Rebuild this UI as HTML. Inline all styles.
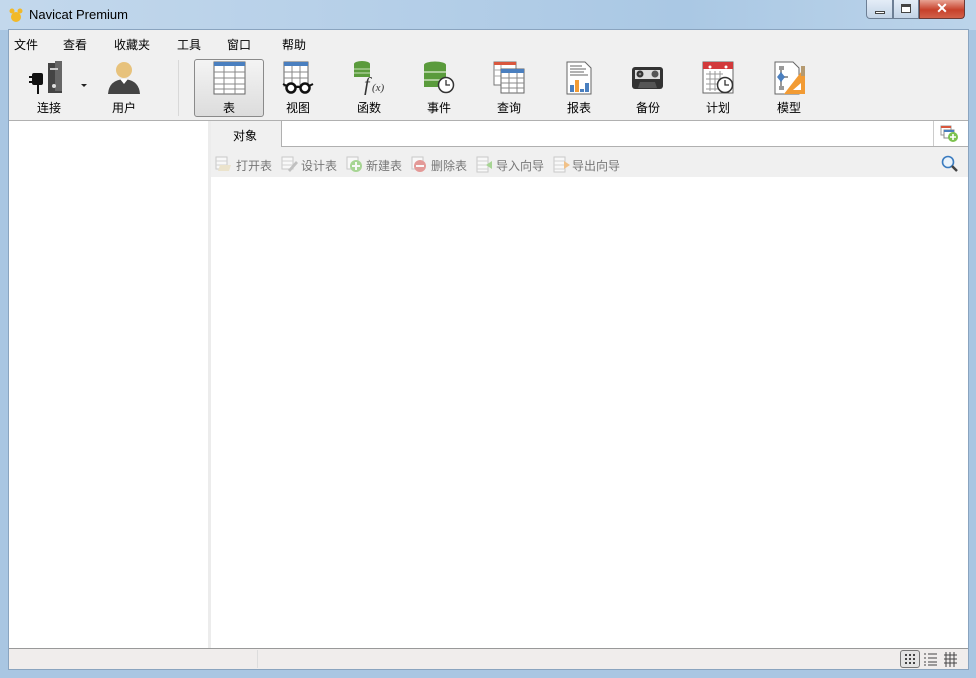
<!DOCTYPE html><html><head><meta charset="utf-8"><style>
*{margin:0;padding:0;box-sizing:border-box}
body{width:976px;height:678px;overflow:hidden;font-family:"Liberation Sans","Noto Sans CJK SC",sans-serif;font-size:12px;color:#000;background:#a9c6e2;position:relative}
.a{position:absolute}
.title{left:0;top:0;width:976px;height:30px;background:linear-gradient(90deg,#c3d8ec,#b5cfe8 40%,#aac8e4 70%,#bcd4ea)}
.client{left:8px;top:29px;width:961px;height:641px;background:#f0f0f0;border:1px solid #8aa4bf}
.tb{text-align:center;width:70px;font-size:12px}
.tb svg{display:block;margin:0 auto}
.at{color:#777;font-size:12px;top:157px}
</style></head><body>
<div class="a title"></div>
<svg class="a" style="left:8px;top:7px" width="16" height="16"><circle cx="8" cy="10" r="5" fill="#f2b928"/><circle cx="4" cy="4" r="2.5" fill="#f2b928"/><circle cx="12" cy="4" r="2.5" fill="#f2b928"/></svg>
<div class="a" style="left:29px;top:7px;font-size:13px">Navicat Premium</div>
<div class="a" style="left:866px;top:0;width:27px;height:19px;border:1px solid #6d7f95;border-top:0;border-radius:0 0 0 4px;background:linear-gradient(#e4edf7,#c3d4e7)"><div class="a" style="left:8px;top:11px;width:10px;height:3px;background:#fff;border:1px solid #444"></div></div>
<div class="a" style="left:893px;top:0;width:26px;height:19px;border:1px solid #6d7f95;border-top:0;background:linear-gradient(#e4edf7,#c3d4e7)"><div class="a" style="left:7px;top:4px;width:10px;height:9px;border:1px solid #444;border-top-width:3px;background:#fff"></div></div>
<div class="a" style="left:919px;top:0;width:46px;height:19px;border:1px solid #6d3a35;border-top:0;border-radius:0 0 4px 0;background:linear-gradient(#e8a393,#c7412b 55%,#d2614a);color:#fff;font-weight:bold;font-size:14px;text-align:center;line-height:17px">✕</div>
<div class="a client"></div>
<div class="a" style="top:36px;left:14px">文件</div>
<div class="a" style="top:36px;left:63px">查看</div>
<div class="a" style="top:36px;left:114px">收藏夹</div>
<div class="a" style="top:36px;left:177px">工具</div>
<div class="a" style="top:36px;left:227px">窗口</div>
<div class="a" style="top:36px;left:282px">帮助</div>
<div class="a" style="left:178px;top:60px;width:1px;height:56px;background:#d8d8d8"></div>
<div class="a" style="left:194px;top:59px;width:70px;height:58px;border:1px solid #8a8a8a;border-radius:3px;background:linear-gradient(#f4f4f4,#dcdcdc)"></div>
<div class="a tb" style="left:14px;top:61px"><svg width="40" height="34"><rect x="19" y="2" width="14" height="30" fill="#444"/><rect x="26" y="0" width="7" height="30" fill="#666"/><rect x="21" y="7" width="8" height="2" fill="#ccc"/><circle cx="25" cy="25" r="2" fill="#ddd"/><rect x="3" y="12" width="11" height="12" rx="2" fill="#111"/><rect x="0" y="15" width="4" height="2" fill="#111"/><rect x="0" y="20" width="4" height="2" fill="#111"/><rect x="8" y="24" width="2" height="9" fill="#111"/></svg><div style="margin-top:4px">连接</div></div>
<div class="a" style="left:81px;top:84px;border:3px solid transparent;border-top:3px solid #222"></div>
<div class="a tb" style="left:89px;top:61px"><svg width="34" height="34"><circle cx="17" cy="9" r="8" fill="#e7c27c"/><path d="M1 33 Q2 19 17 18 Q32 19 33 33Z" fill="#444"/><path d="M13 18 L17 23 L21 18Z" fill="#fff"/></svg><div style="margin-top:4px">用户</div></div>
<div class="a tb" style="left:194px;top:61px"><svg width="34" height="34"><rect x="2" y="1" width="31" height="32" fill="#fff" stroke="#666"/><rect x="2" y="1" width="31" height="4" fill="#4a7fbf"/><path d="M2 11H33M2 17H33M2 23H33M2 28H33M12 5V33M23 5V33" stroke="#888"/></svg><div style="margin-top:4px">表</div></div>
<div class="a tb" style="left:263px;top:61px"><svg width="34" height="34"><rect x="3" y="1" width="24" height="24" fill="#fff" stroke="#666"/><rect x="3" y="1" width="24" height="4" fill="#4a7fbf"/><path d="M3 11H27M3 17H27M11 5V25M19 5V25" stroke="#888"/><circle cx="10" cy="27" r="4.5" fill="#fff" stroke="#111" stroke-width="2.5"/><circle cx="24" cy="27" r="4.5" fill="#fff" stroke="#111" stroke-width="2.5"/><path d="M14 26H20M2 23L6 25M32 23L28 25" stroke="#111" stroke-width="2"/></svg><div style="margin-top:4px">视图</div></div>
<div class="a tb" style="left:334px;top:61px"><svg width="34" height="34"><ellipse cx="10" cy="3" rx="8" ry="3" fill="#5a9b3c"/><rect x="2" y="3" width="16" height="13" fill="#5a9b3c"/><path d="M2 8H18M2 12H18" stroke="#c8e0b8"/><text x="12" y="30" font-family="Liberation Serif" font-style="italic" font-size="20" fill="#333">f</text><text x="20" y="30" font-family="Liberation Serif" font-style="italic" font-size="11" fill="#333">(x)</text></svg><div style="margin-top:4px">函数</div></div>
<div class="a tb" style="left:404px;top:61px"><svg width="34" height="34"><ellipse cx="13" cy="4" rx="11" ry="3.5" fill="#5a9b3c"/><rect x="2" y="4" width="22" height="22" fill="#5a9b3c"/><path d="M2 11H24M2 19H24" stroke="#c8e0b8" stroke-width="1.5"/><circle cx="24" cy="24" r="7.5" fill="#fff" stroke="#333" stroke-width="1.5"/><path d="M24 19V24H28" stroke="#333" stroke-width="1.3" fill="none"/></svg><div style="margin-top:4px">事件</div></div>
<div class="a tb" style="left:474px;top:61px"><svg width="34" height="34"><rect x="2" y="1" width="22" height="23" fill="#fff" stroke="#777"/><rect x="2" y="1" width="22" height="3" fill="#d9573d"/><path d="M2 9H24M2 15H24M9 4V24" stroke="#aaa"/><rect x="9" y="8" width="23" height="24" fill="#fff" stroke="#666"/><rect x="9" y="8" width="23" height="4" fill="#4a7fbf"/><path d="M9 17H32M9 22H32M9 27H32M17 12V32M25 12V32" stroke="#888"/></svg><div style="margin-top:4px">查询</div></div>
<div class="a tb" style="left:544px;top:61px"><svg width="34" height="34"><path d="M5 1H23L29 7V33H5Z" fill="#fff" stroke="#666"/><path d="M8 5H20M8 8H24M8 11H22M8 14H26" stroke="#666"/><rect x="8" y="24" width="4" height="7" fill="#4a7fbf"/><rect x="13" y="19" width="4" height="12" fill="#f29b34"/><rect x="18" y="28" width="4" height="3" fill="#4a7fbf"/><rect x="23" y="22" width="4" height="9" fill="#4a7fbf"/></svg><div style="margin-top:4px">报表</div></div>
<div class="a tb" style="left:613px;top:61px"><svg width="34" height="34"><rect x="1" y="6" width="31" height="22" rx="3" fill="#333"/><rect x="4" y="9" width="25" height="9" fill="#ddd"/><circle cx="9" cy="13" r="3.5" fill="#333"/><circle cx="24" cy="13" r="3.5" fill="#555"/><circle cx="9" cy="13" r="1.3" fill="#888"/><path d="M7 27L9 21H24L26 27" fill="#555"/></svg><div style="margin-top:4px">备份</div></div>
<div class="a tb" style="left:683px;top:61px"><svg width="34" height="34"><rect x="2" y="1" width="30" height="31" fill="#fff" stroke="#666"/><rect x="2" y="1" width="30" height="7" fill="#d2393b"/><circle cx="9" cy="6" r="1.5" fill="#fff"/><circle cx="25" cy="6" r="1.5" fill="#fff"/><path d="M5 13H22M5 18H20M5 23H20M5 28H20M9 10V30M14 10V30M19 10V30" stroke="#999"/><circle cx="24" cy="24" r="7.5" fill="#fff" stroke="#333" stroke-width="1.5"/><path d="M24 19V24H28" stroke="#333" stroke-width="1.3" fill="none"/></svg><div style="margin-top:4px">计划</div></div>
<div class="a tb" style="left:754px;top:61px"><svg width="34" height="34"><path d="M3 1H21L27 7V33H3Z" fill="#fff" stroke="#666"/><path d="M9 8V28M9 16H16" stroke="#999" stroke-width="2"/><rect x="7" y="5" width="5" height="4" fill="#999"/><rect x="7" y="25" width="5" height="4" fill="#999"/><path d="M9 11L13 16L9 21L5 16Z" fill="#4a7fbf"/><path d="M33 6V33H12Z" fill="#f29b34"/><path d="M29 22V29H21Z" fill="#fff"/><rect x="29" y="5" width="4" height="10" fill="#b59a70"/></svg><div style="margin-top:4px">模型</div></div>
<div class="a" style="left:9px;top:120px;width:959px;height:1px;background:#b0b0b0"></div>
<div class="a" style="left:9px;top:121px;width:199px;height:527px;background:#fff"></div>
<div class="a" style="left:208px;top:121px;width:3px;height:527px;background:#ececec"></div>
<div class="a" style="left:233px;top:127px">对象</div>
<div class="a" style="left:281px;top:121px;width:687px;height:26px;background:#fff;border-left:1px solid #b0b0b0;border-bottom:1px solid #b0b0b0"></div>
<div class="a" style="left:933px;top:121px;width:1px;height:25px;background:#ccc"></div>
<svg class="a" style="left:940px;top:125px" width="20" height="18"><rect x="1" y="1" width="10" height="9" fill="#fff" stroke="#999"/><rect x="1" y="1" width="10" height="2" fill="#d9573d"/><rect x="4" y="5" width="10" height="8" fill="#fff" stroke="#888"/><rect x="4" y="5" width="10" height="2" fill="#4a7fbf"/><circle cx="13" cy="12" r="5" fill="#7cc24e"/><path d="M13 9V15M10 12H16" stroke="#fff" stroke-width="1.6"/></svg>
<!-- action bar -->
<svg class="a" style="left:215px;top:156px" width="360" height="17">
<g opacity="0.55">
<rect x="1" y="1" width="11" height="12" fill="#fff" stroke="#aaa"/><path d="M1 5H12M1 9H12" stroke="#bbb"/><path d="M5 9H16L14 15H3Z" fill="#e8d9b0"/>
<g transform="translate(66,0)"><rect x="1" y="1" width="11" height="12" fill="#fff" stroke="#aaa"/><path d="M1 5H12M1 9H12" stroke="#bbb"/><path d="M7 14L15 5L17 7L9 16Z" fill="#999"/></g>
<g transform="translate(131,0)"><rect x="1" y="1" width="11" height="12" fill="#fff" stroke="#aaa"/><circle cx="10" cy="10" r="6" fill="#6cc04a"/><path d="M10 6V14M6 10H14" stroke="#fff" stroke-width="2"/></g>
<g transform="translate(196,0)"><rect x="1" y="1" width="11" height="12" fill="#fff" stroke="#aaa"/><circle cx="9" cy="10" r="6" fill="#d9534f"/><path d="M5 10H13" stroke="#fff" stroke-width="2"/></g>
<g transform="translate(261,0)"><rect x="1" y="1" width="11" height="15" fill="#fff" stroke="#aaa"/><path d="M1 5H12M1 9H12M1 13H12" stroke="#bbb"/><path d="M16 5V13L10 9Z" fill="#6cc04a"/></g>
<g transform="translate(338,0)"><rect x="1" y="1" width="11" height="15" fill="#fff" stroke="#aaa"/><path d="M1 5H12M1 9H12M1 13H12" stroke="#bbb"/><path d="M11 5V13L17 9Z" fill="#f29b34"/></g>
</g></svg>
<div class="a at" style="left:236px">打开表</div>
<div class="a at" style="left:301px">设计表</div>
<div class="a at" style="left:366px">新建表</div>
<div class="a at" style="left:431px">删除表</div>
<div class="a at" style="left:496px">导入向导</div>
<div class="a at" style="left:572px">导出向导</div>
<svg class="a" style="left:941px;top:155px" width="18" height="18"><circle cx="7" cy="7" r="5.5" fill="#eaf3fb" stroke="#3a7bbf" stroke-width="1.6"/><path d="M11 11L16 16" stroke="#444" stroke-width="2.5"/></svg>
<div class="a" style="left:211px;top:177px;width:757px;height:471px;background:#fff"></div>
<div class="a" style="left:9px;top:648px;width:959px;height:1px;background:#999"></div>
<div class="a" style="left:9px;top:649px;width:959px;height:20px;background:#f0edec"></div>
<div class="a" style="left:257px;top:650px;width:1px;height:18px;background:#ddd"></div>
<div class="a" style="left:900px;top:650px;width:20px;height:18px;border:1px solid #777;border-radius:3px;background:#e4e4e4"></div>
<svg class="a" style="left:900px;top:650px" width="60" height="18">
<g fill="#444"><rect x="5" y="4" width="2" height="2"/><rect x="9" y="4" width="2" height="2"/><rect x="13" y="4" width="2" height="2"/><rect x="5" y="8" width="2" height="2"/><rect x="9" y="8" width="2" height="2"/><rect x="13" y="8" width="2" height="2"/><rect x="5" y="12" width="2" height="2"/><rect x="9" y="12" width="2" height="2"/><rect x="13" y="12" width="2" height="2"/></g>
<path d="M24 4H26M28 4H37M24 8H26M28 8H37M24 12H26M28 12H37M24 15H26M28 15H37" stroke="#444"/>
<path d="M46 2V17M50 2V17M54 2V17M44 5H57M44 9H57M44 13H57" stroke="#444"/>
</svg>
</body></html>
